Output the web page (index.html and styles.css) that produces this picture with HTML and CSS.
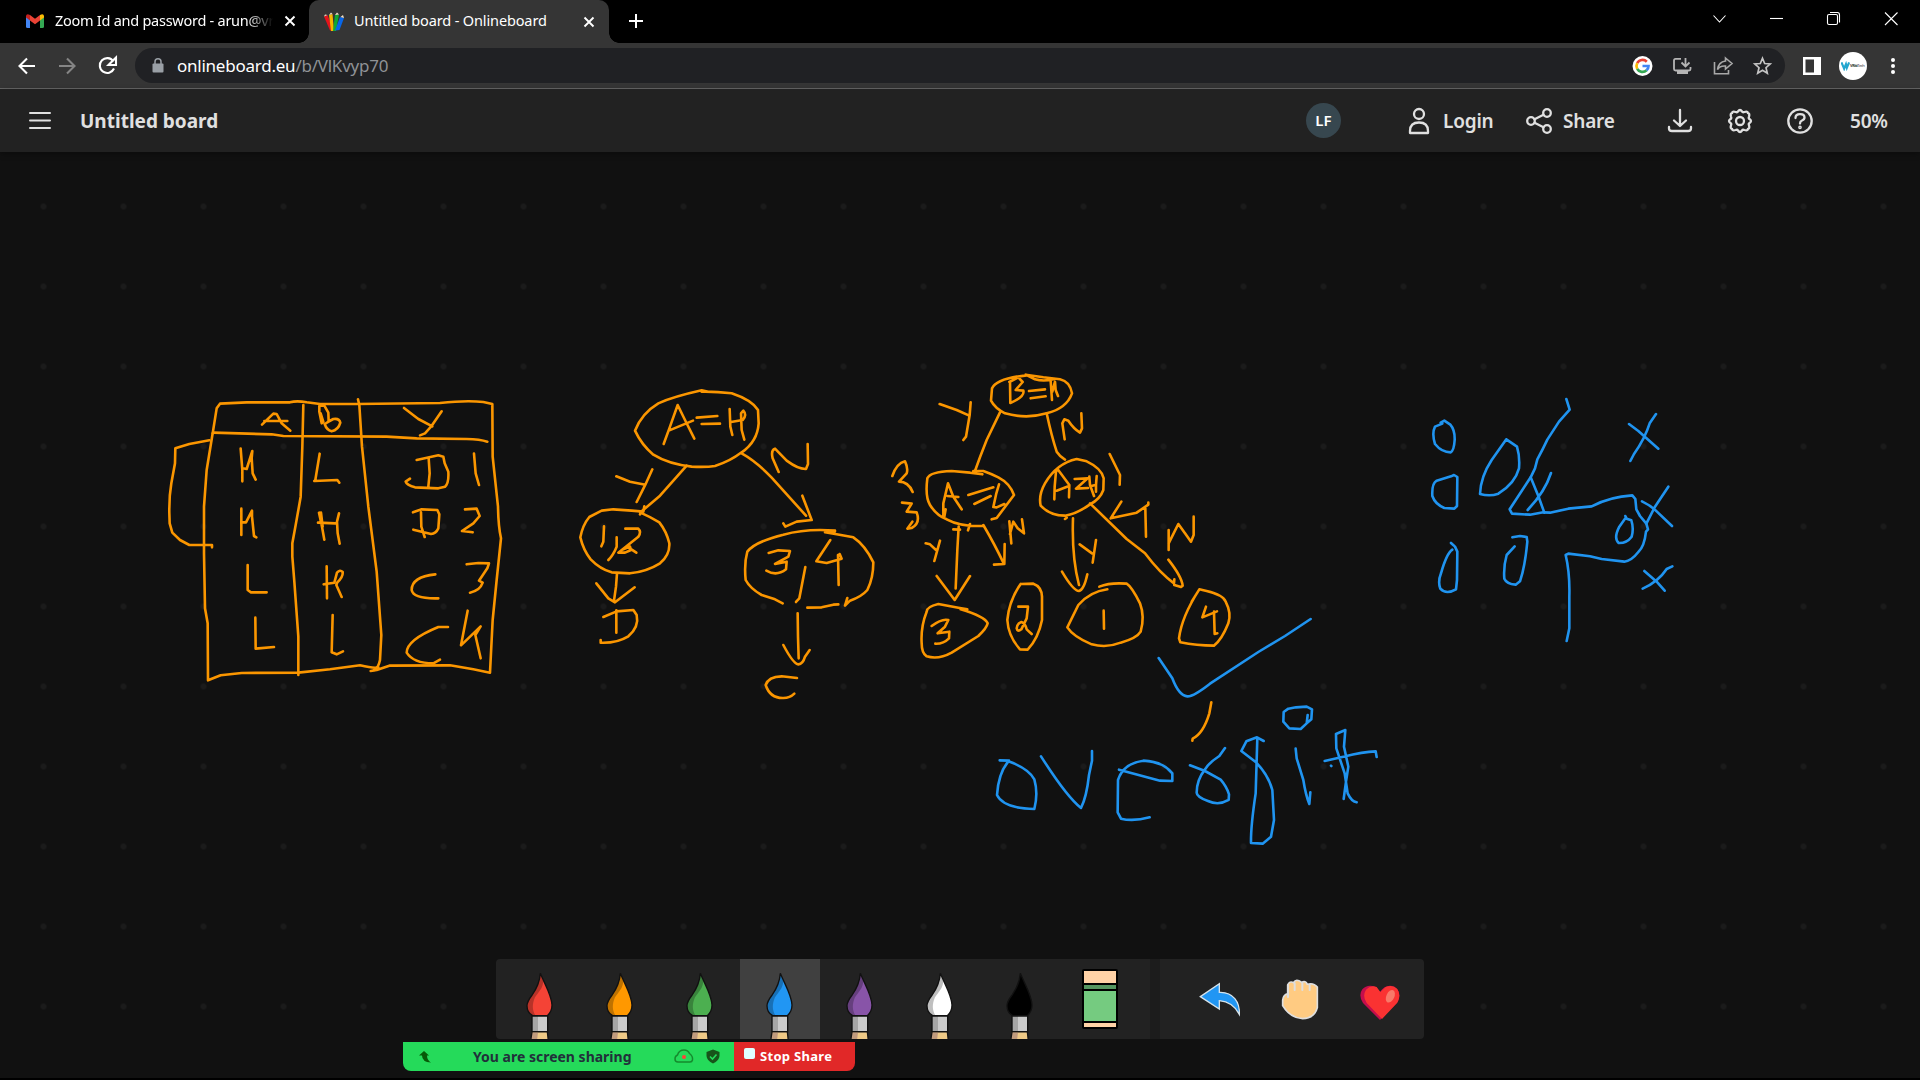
FILE: index.html
```html
<!DOCTYPE html>
<html lang="en">
<head>
<meta charset="utf-8">
<title>Untitled board - Onlineboard</title>
<link rel="stylesheet" href="styles.css">
</head>
<body>
<svg class="defs" width="0" height="0" aria-hidden="true">
  <defs>
    <symbol id="brush" viewBox="0 0 240 240">
      <path d="M95 220H143L145 246H92Z" fill="#efc986"/>
      <path d="M95 220H114L111 246H92Z" fill="#c09a7c"/>
      <path d="M96 218L92 246M142 218L145 246" stroke="#111" stroke-width="4" fill="none"/>
      <rect x="97" y="171" width="46" height="47" fill="#cbcbcb"/>
      <rect x="97" y="171" width="17" height="47" fill="#a6a6a6"/>
      <rect x="96" y="171" width="47" height="47" fill="none" stroke="#111" stroke-width="4"/>
      <path d="M121 43C119 68 113 84 97 107C88 119 81 128 81 140C81 153 87 164 98 170H142C152 161 156 151 156 138C155 108 135 78 121 43Z" fill="currentColor"/>
      <path d="M121 43C119 68 113 84 97 107C88 119 81 128 81 140C81 153 87 164 98 170H107C96 155 96 135 105 115C116 98 129 88 130 66Z" fill="#000" opacity=".25"/>
      <path d="M121 43C119 68 113 84 97 107C88 119 81 128 81 140C81 153 87 164 98 170H142C152 161 156 151 156 138C155 108 135 78 121 43Z" fill="none" stroke="#111" stroke-width="4"/>
    </symbol>
    <symbol id="cross" viewBox="0 0 12 12"><path d="M1.500 1.500L10.500 10.500M10.500 1.500L1.500 10.500" stroke="#fff" stroke-width="1.900"/></symbol>
  </defs>
</svg>

<div class="tabs">
  <div class="tab">
    <svg class="favicon" width="18" height="14" viewBox="0 0 18 14"><path d="M0 2V12.500Q0 14 1.500 14H4V5Z" fill="#4285f4"/><path d="M18 2V12.500Q18 14 16.500 14H14V5Z" fill="#34a853"/><path d="M14 1V6.500L18 3.500V2Q17.500-1 14 1Z" fill="#fbbc04"/><path d="M4 1V6.500L0 3.500V2Q.5-1 4 1Z" fill="#c5221f"/><path d="M4 1L9 4.800L14 1V6.500L9 10.300L4 6.500Z" fill="#ea4335"/></svg>
    <span class="tab-title mail">Zoom Id and password - arun@vr</span>
    <svg class="tab-close" width="12" height="12"><use href="#cross"/></svg>
  </div>
  <div class="tab active">
    <svg class="favicon" width="20" height="19" viewBox="0 0 20 19"><path d="M0 4.500L3.500 3L9.500 18.500H6Z" fill="#e3131b"/><path d="M5 3L8.500 2L10 19H7Z" fill="#f7b500"/><path d="M11 3L15 2.500L12 19H9Z" fill="#10a832"/><path d="M16 5L20 6L15.500 18L11 18.500Z" fill="#0866e8"/><path d="M0 4.500L1 2.500L3.500 3ZM5 3L7 .5L8.500 2ZM11 3L13 .5L15 2.500ZM16.500 5L19 3L20 6Z" fill="#f3e2cb"/></svg>
    <span class="tab-title">Untitled board - Onlineboard</span>
    <svg class="tab-close" width="12" height="12"><use href="#cross"/></svg>
  </div>
  <svg class="new-tab" width="16" height="16" viewBox="0 0 16 16"><path d="M8 1V15M1 8H15" stroke="#fff" stroke-width="2"/></svg>
  <div class="window-controls">
    <svg width="57" height="37" viewBox="0 0 57 37"><path d="M22.500 15.500L28.500 22L34.500 15.500"/></svg>
    <svg width="57" height="37" viewBox="0 0 57 37"><path d="M22 18.500H35"/></svg>
    <svg width="57" height="37" viewBox="0 0 57 37"><rect x="22.500" y="14.500" width="10" height="10" rx="1.500"/><path d="M25 12.500H32.500Q34.500 12.500 34.500 15V22.500"/></svg>
    <svg width="58" height="37" viewBox="0 0 58 37"><path d="M23 12.500L35.500 25M35.500 12.500L23 25"/></svg>
  </div>
</div>

<div class="toolbar">
  <svg class="nav" width="40" height="40" viewBox="0 0 40 40"><path d="M28 20H13M20 12.500L12.500 20L20 27.500"/></svg>
  <svg class="nav off" width="40" height="40" viewBox="0 0 40 40"><path d="M12 20H27M20 12.500L27.500 20L20 27.500"/></svg>
  <svg class="nav" width="40" height="40" viewBox="0 0 40 40"><path d="M26.300 15.300A7.400 7.400 0 1 0 27 22.500"/><path d="M29 11.500V19H21.500Z" fill="#fff" stroke="none"/></svg>
  <div class="address">
    <svg class="lock" width="12" height="15" viewBox="0 0 12 15"><rect x=".5" y="5.500" width="11" height="9" rx="1" fill="#9aa0a6"/><path d="M3 6V3.800A3 3 0 0 1 9 3.800V6" fill="none" stroke="#9aa0a6" stroke-width="1.500"/></svg>
    <span class="url">onlineboard.eu<span class="path">/b/VlKvyp70</span></span>
    <svg class="act" width="40" height="35" viewBox="0 0 40 35"><circle cx="20.500" cy="18" r="10" fill="#fff"/><g fill="none" stroke-width="2.700"><path d="M24.800 13.700A6 6 0 0 0 15.200 15.200" stroke="#ea4335"/><path d="M15.200 15.200A6 6 0 0 0 15.200 20.800" stroke="#fbbc05"/><path d="M15.200 20.800A6 6 0 0 0 24.600 22.300" stroke="#34a853"/><path d="M24.600 22.300A6 6 0 0 0 26.500 18H20.500" stroke="#4285f4"/></g></svg>
    <svg class="act" width="40" height="35" viewBox="0 0 40 35"><g fill="none" stroke="#b5b5b5" stroke-width="1.800"><path d="M19 10.800H13.500Q12 10.800 12 12.500V21Q12 22.500 13.500 22.500H27Q28.500 22.500 28.500 21V19"/><path d="M23.500 10V18M19.500 14.500L23.500 18.500L27.500 14.500"/></g><path d="M15 23H26V26H15Z" fill="#b5b5b5"/></svg>
    <svg class="act" width="40" height="35" viewBox="0 0 40 35"><g fill="none" stroke="#a8a8a8" stroke-width="1.600"><path d="M12.500 14V25.800H26.500V22"/><path d="M23.500 10L30 15.500L23.500 21V18Q18 17.500 15.500 21.500Q16.500 14 23.500 13Z"/></g></svg>
    <svg class="act" width="40" height="35" viewBox="0 0 40 35"><path d="M20.500 10.300L22.700 15.500L28.200 16L24 19.700L25.300 25.200L20.500 22.300L15.700 25.200L17 19.700L12.800 16L18.300 15.500Z" fill="none" stroke="#c4c4c4" stroke-width="1.700"/></svg>
  </div>
  <svg class="panel-icon" width="18" height="18" viewBox="0 0 18 18"><rect width="18" height="18" fill="#fff"/><rect x="2.500" y="2.500" width="8.500" height="13" fill="#353535"/></svg>
  <span class="avatar"><svg width="9" height="10" viewBox="0 0 10 10"><path d="M.5 1L3.500 8L5.500 3L6.500 7L9 1" fill="none" stroke="#23a6cf" stroke-width="2.400"/></svg><span><b>VRiti</b>Tech</span></span>
  <svg class="more" width="8" height="18" viewBox="0 0 8 18"><g fill="#fff"><circle cx="4" cy="3" r="2"/><circle cx="4" cy="9" r="2"/><circle cx="4" cy="15" r="2"/></g></svg>
</div>

<header class="board-bar">
  <svg class="burger" width="24" height="20" viewBox="0 0 24 20"><path d="M2 2H22M2 9.500H22M2 17H22" stroke="#e0e0e0" stroke-width="2" stroke-linecap="round"/></svg>
  <h1>Untitled board</h1>
  <span class="user">LF</span>
  <div class="action login"><svg width="28" height="28" viewBox="0 0 28 28"><circle cx="14" cy="7" r="5"/><path d="M5 26V24Q5 15.500 14 15.500Q23 15.500 23 24V26Z"/></svg><span>Login</span></div>
  <div class="action share"><svg width="28" height="28" viewBox="0 0 28 28"><circle cx="6" cy="14" r="3.800"/><circle cx="22" cy="6" r="3.800"/><circle cx="22" cy="22" r="3.800"/><path d="M9.500 12.200L18.500 7.800M9.500 15.800L18.500 20.200"/></svg><span>Share</span></div>
  <div class="tool"><svg width="28" height="28" viewBox="0 0 28 28"><path d="M14 3V19M8 13.500L14 19L20 13.500M3 20V21.500Q3 24 6 24H22Q25 24 25 21.500V20"/></svg></div>
  <div class="tool"><svg width="28" height="28" viewBox="0 0 28 28"><path d="M12 4.500Q14 1.500 16 4.500Q16.700 5.700 18.400 5Q21.800 4 21.900 6.100Q24 6.200 23 9.600Q22.300 11.300 23.500 12Q26.500 14 23.500 16Q22.300 16.700 23 18.400Q24 21.800 21.900 21.900Q21.800 24 18.400 23Q16.700 22.300 16 23.500Q14 26.500 12 23.500Q11.300 22.300 9.600 23Q6.200 24 6.100 21.900Q4 21.800 5 18.400Q5.700 16.700 4.500 16Q1.500 14 4.500 12Q5.700 11.300 5 9.600Q4 6.200 6.100 6.100Q6.200 4 9.600 5Q11.300 5.700 12 4.500Z"/><circle cx="14" cy="14" r="4"/></svg></div>
  <div class="tool"><svg width="28" height="28" viewBox="0 0 28 28"><circle cx="14" cy="14" r="11.700"/><path d="M9.500 11Q9.500 7.200 14 7.200Q18.500 7.200 18.500 10.500Q18.500 12.500 16 13.500Q14 14.300 14 16.500"/><circle cx="14" cy="20.300" r=".7"/></svg></div>
  <span class="zoom">50%</span>
</header>

<main class="board">
  <svg class="ink" width="1920" height="926" viewBox="0 152 1920 926">
    <!-- truth table -->
    <g class="orange" transform="translate(150 380) scale(.33333)">
      <path d="M188 160L200 85L210 71L290 67L420 67Q440 61 470 67L510 72L620 72L870 69Q950 60 1000 66L1027 72L1028 230L1044 380Q1045 440 1053 475L1040 600L1028 720L1020 878L970 868L900 856L718 857L680 870L662 873"/>
      <path d="M685 862Q672 866 630 856L540 868L445 878L275 879L212 886L174 901L173 730L165 685L162 520L162 380L170 270L188 160"/>
      <path d="M190 158L365 163L400 168L710 170L800 175L950 177Q990 178 1012 185"/>
      <path d="M460 75L457 200L452 350Q440 420 427 490L427 530L433 605L445 770L445 885"/>
      <path d="M624 58L628 75L636 200L655 380L680 575L694 765L690 840Q685 865 672 870"/>
      <path d="M178 181L118 192L76 205L75 250L64 310Q57 350 58 400L59 430L67 458L90 480L118 495L186 495L186 502"/>
      <path d="M336 134L370 101L380 102L395 130L421 152M343 123L412 123M508 78L508 95L515 130L520 126L512 100M513 77L523 77L535 98L536 125L524 132Q530 150 545 154Q565 150 571 128Q568 114 550 117L533 126"/>
      <path d="M762 84L805 117L847 139M875 94L843 140L825 160L810 166"/>
      <path d="M272 206L277 270L277 304M278 265L290 267L307 213L305 235L308 280L317 299M509 221L496 300L493 303L562 300L568 308M800 240L865 226L880 230L884 250L895 275Q897 310 885 320L865 325L795 322Q770 315 767 305L780 296M836 235L839 280L835 320M972 221L977 280L987 315"/>
      <path d="M274 386L274 465M276 427L288 427L306 392L306 410L312 468L319 472M507 398L516 440L523 479M513 398L518 440M504 428L556 430M567 400L561 425L563 460L569 491M789 397L815 388L862 390L868 403L865 445Q858 460 843 462L790 449M813 397L814 440L824 471M945 388L980 386L989 408L970 430L936 453L968 457"/>
      <path d="M293 555L293 630L303 637L350 637M530 559L531 655M521 613L553 608L561 578Q570 568 578 576Q580 590 562 607L559 615L575 651M856 583Q785 590 785 630Q790 657 865 655M950 553L985 549L1017 550L1012 565L987 602L998 608Q990 632 960 638"/>
      <path d="M316 713L317 806L372 801M548 705L545 817L560 823L579 814M894 741L865 741Q770 780 770 818Q790 850 850 850L870 839M953 692L933 796L992 739L976 765L992 835"/>
    </g>
    <!-- first tree -->
    <g class="orange" transform="translate(560 370) scale(.33333)">
      <path d="M445 65L425 61Q340 80 295 100Q245 130 225 182Q245 225 280 254Q325 282 395 290Q440 292 465 288Q510 274 545 247Q592 215 596 160L594 120Q575 90 515 70Q465 64 425 65"/>
      <path d="M311 222L330 170L353 105L375 150L403 206M328 181L399 152M410 143L472 138M425 162L480 161M509 117L511 170L517 195M513 156L548 150Q562 135 550 122L543 130L545 180L553 209"/>
      <path d="M380 287L300 377L245 424L240 433M169 319L210 335L256 344M277 298L256 344L230 396M545 250Q590 275 635 323L738 437M755 450L727 377M755 450L710 455L676 470L670 460M656 306L638 265Q632 240 645 236L680 272Q715 298 738 297L744 282L743 222"/>
      <path d="M253 409L250 425L215 422L160 418L125 422L88 441Q68 465 61 502Q70 540 92 568Q120 597 155 607L210 610Q260 605 300 580Q330 555 328 520Q320 485 298 457Q270 440 240 427"/>
      <path d="M132 469L130 515L124 529M170 502L170 530Q160 555 145 570M196 476L235 476Q245 485 235 500L175 548L195 548L213 540L210 530L190 538M205 532L229 548M171 610L168 650L162 692M109 640L145 685L165 697L224 652M169 721L169 788M130 741L170 724L220 720L230 735Q238 770 205 799Q170 820 122 818L122 810"/>
      <path d="M825 484L795 487L830 493L880 502Q915 525 940 577Q940 625 922 660Q905 680 870 692L855 707L862 684M835 703L820 704L785 712L742 713M668 700L645 688L605 675Q570 655 557 630Q552 580 562 545Q585 515 670 494Q740 475 825 482"/>
      <path d="M626 549L655 541L690 543L685 560L645 582L680 575L678 598Q650 620 619 602M736 591L718 685L708 696M811 510L769 574L800 579L845 566L839 552M834 555L836 645M713 730L714 800L716 865M670 825Q700 882 715 883Q729 882 735 860L749 840M711 924L665 919Q625 920 617 945Q630 985 670 984Q690 984 703 971"/>
    </g>
    <!-- second tree -->
    <g class="orange" transform="translate(880 360) scale(.33333)">
      <path d="M440 46Q350 55 336 85L333 122Q345 145 375 160Q440 178 500 160Q560 145 576 100Q570 65 540 58L490 52L437 44L465 58Q490 65 520 58M390 65L391 129M388 66L415 52L428 66L407 90L430 92Q435 110 391 129M447 93L495 88M452 115L497 109M512 63L516 120M517 95L525 65L527 90L534 108"/>
      <path d="M179 132L230 150L268 167M272 127L269 165L258 230L250 240M360 157L320 240Q300 290 285 333M554 238L547 190L553 178L565 182Q580 205 600 218L606 205L604 160M500 160Q515 230 530 275Q540 290 555 299"/>
      <path d="M307 343L270 338L215 333Q150 335 142 355Q135 410 150 435Q170 467 200 478Q240 500 310 498M220 508L240 509M264 511L270 492M335 478L350 474L402 405Q390 370 355 352Q330 340 310 333L280 333M190 465L190 430L204 370L220 410L245 448M202 408L235 411M265 405L340 382M283 432L332 408M197 448L193 470M357 373L349 400L340 441L350 442L373 432"/>
      <path d="M37 348Q50 310 75 304Q85 325 80 340L57 365Q85 365 98 396M66 428L95 431L80 455L110 457Q122 490 95 504L82 506L97 485M137 550L150 553L168 570M180 542L163 603M236 500L232 570L227 685M170 648L224 720L270 648M310 495Q345 555 370 608M374 552L373 612L342 614M388 484L394 550M390 522L400 485L413 505L432 520L426 478"/>
      <path d="M590 297L620 304Q665 325 671 355L670 390Q660 418 630 433Q590 462 555 467Q510 467 482 437Q475 405 495 370Q530 310 590 297M523 418L524 380L528 335L533 328L568 375L567 412M530 392L567 378M584 357L623 355L588 386L624 384M628 350L630 375L642 408M634 378L646 375M650 348L648 375L648 395M689 282L720 345L719 374M555 477L560 473"/>
      <path d="M579 475Q575 590 597 675M546 635Q580 693 597 693Q612 690 622 643M599 553L636 580M648 540L638 608M630 430L740 537L795 580Q840 640 882 670L883 658M865 599Q905 650 908 677L903 681L883 675M724 425L692 475L770 458L805 434L805 428M796 445L798 530M866 570L866 510M866 550L895 492L915 520L933 545L941 525L941 470"/>
      <path d="M262 748L235 743L175 732Q140 740 140 755Q122 800 125 850Q125 880 140 889Q175 900 215 878L295 828Q320 805 323 790Q315 770 242 748M155 798Q185 775 205 780L195 800L173 820L208 815L207 835Q190 852 166 851M422 672L460 671Q485 680 486 710L486 780Q475 835 443 869L420 868Q385 830 382 780Q388 720 422 672M415 740L444 740L440 775L424 808Q412 817 410 805Q412 790 424 786Q436 790 440 808L455 822"/>
      <path d="M682 688Q630 695 595 735L562 802Q580 830 635 853Q680 865 722 848Q770 835 782 815Q795 770 780 730Q755 680 740 671Q690 667 658 680M671 752L672 806"/>
    </g>
    <g class="orange" transform="translate(980 600) scale(.33333)">
      <path d="M635 5L658 -32L680 -27Q730 -15 737 5Q755 40 745 70Q725 120 702 137Q650 137 601 127L597 115Q605 50 658 -32M678 20L667 52L711 34M702 35L704 102L712 100M694 307L688 340Q670 400 638 416L637 422"/>
    </g>
    <!-- check mark and caption -->
    <g class="blue" transform="translate(980 600) scale(.33333)">
      <path d="M536 174L577 235Q597 288 622 289Q640 290 690 251L835 156L915 108L992 57"/>
      <path d="M59 481L87 482M85 484Q145 505 163 538Q175 580 163 627Q70 625 51 585Q55 520 85 484M183 469Q260 590 303 624Q320 590 327 525L336 482L336 453"/>
      <path d="M417 509L540 542L577 543L577 520Q550 485 490 482Q430 490 414 540L413 637L423 656Q460 665 509 652M630 496L675 513L722 539Q740 560 747 583L746 600Q715 618 684 603Q650 590 650 578Q650 540 675 508Q685 490 718 468L735 444"/>
      <path d="M851 423L831 412L799 424L784 453L828 487Q865 525 877 570L882 660L873 710L848 731L813 729Q812 680 827 580L832 415"/>
      <path d="M947 446L950 475L970 540Q977 585 988 612L991 577M948 322L980 320L996 328L994 358L980 370L962 387L928 385L910 365L911 336L925 326L948 322M983 345L980 370"/>
      <path d="M1034 483L1090 470Q1150 455 1187 454L1190 471M1068 402L1096 390L1092 440L1105 500L1098 545L1091 597M1068 402L1069 445L1094 520L1103 580Q1115 605 1130 607M1053 497L1054 498"/>
    </g>
    <!-- decision boundary sketch -->
    <g class="blue" transform="translate(1410 380) scale(.33333)">
      <path d="M92 128L103 122L121 134Q135 150 134 180Q132 212 122 217Q95 217 75 192Q65 160 75 140L97 131M123 289L132 285L142 291L141 378L133 386L103 384Q75 372 67 348Q65 310 80 302L123 289M123 489L135 500L142 515L141 600L138 628Q108 645 91 626Q83 605 93 580Q110 520 127 509"/>
      <path d="M289 178L321 200Q330 230 327 265Q315 310 265 341Q240 350 210 342Q212 290 245 240L289 178M307 472L330 468L350 471L352 485Q345 560 330 604L317 614Q290 612 283 596Q280 560 290 525L314 499M646 408L650 416L664 421Q672 445 665 470Q650 490 626 489Q610 475 628 440L646 415"/>
      <path d="M469 57L479 89L447 125L412 179Q400 205 382 238L375 265L362 292L299 388L306 401L360 404L400 397L420 398L475 386L545 379Q600 350 667 346L676 357L679 388L690 408L709 431L714 448L708 455Q703 500 685 516Q665 542 643 545L575 537L540 529L475 521L467 525Q480 580 478 650L478 745L470 783"/>
      <path d="M362 292L385 348L403 398M423 279Q405 335 353 390M657 132L685 153L745 206M738 102L719 130Q705 175 672 222L661 243M696 364Q720 375 740 394L786 438M775 320L735 380L709 431M703 573L740 605L764 632M787 559L770 567Q745 605 698 626"/>
    </g>
  </svg>

  <div class="dock">
    <div class="brushes">
      <div class="slot red"><svg width="80" height="80"><use href="#brush"/></svg></div>
      <div class="slot amber"><svg width="80" height="80"><use href="#brush"/></svg></div>
      <div class="slot green"><svg width="80" height="80"><use href="#brush"/></svg></div>
      <div class="slot azure selected"><svg width="80" height="80"><use href="#brush"/></svg></div>
      <div class="slot violet"><svg width="80" height="80"><use href="#brush"/></svg></div>
      <div class="slot white"><svg width="80" height="80"><use href="#brush"/></svg></div>
      <div class="slot black"><svg width="80" height="80"><use href="#brush"/></svg></div>
      <div class="slot"><svg width="80" height="80" viewBox="0 0 240 240"><rect x="66" y="30" width="108" height="180" rx="6" fill="#000"/><path d="M72 36H168V72H72ZM72 192H168V204H72Z" fill="#ffd2a6"/><path d="M72 78H168V90H72Z" fill="#559660"/><path d="M72 96H168V186H72Z" fill="#75cb80"/></svg></div>
    </div>
    <div class="divider"></div>
    <div class="extras">
      <div class="slot"><svg width="80" height="80" viewBox="0 0 240 240"><path d="M61 113L118 74V100C160 98 180 130 178 166C165 141 145 127 118 125V150Z" fill="#2196f3" stroke="#d5e2ea" stroke-width="4"/></svg></div>
      <div class="slot"><svg width="80" height="80" viewBox="0 0 240 240"><path d="M83 95V78Q88 65 101 71Q108 57 125 70Q137 64 142 76Q160 70 172 84V146Q164 178 128 179Q90 177 68 140V123Q70 108 83 104Z" fill="#ffcb82" stroke="#dedede" stroke-width="5"/><path d="M84 78V114M104 73V93M127 72V93M149 77V93" stroke="#dedede" stroke-width="6" fill="none" stroke-linecap="round"/></svg></div>
      <div class="slot"><svg width="80" height="80" viewBox="0 0 240 240"><path d="M120 183L69 132Q54 109 67 91Q82 74 105 83L120 99Q137 74 163 83Q186 99 174 127Z" fill="#c50d4c"/><path d="M126 180L80 132Q66 112 78 92Q93 77 110 84L121 99L137 84Q158 75 172 90Q184 110 172 131Z" fill="#fa3232"/><ellipse cx="151" cy="112" rx="12" ry="20" transform="rotate(25 151 112)" fill="#f87969"/></svg></div>
    </div>
  </div>

  <div class="sharing">
    <div class="status">
      <svg width="12" height="12" viewBox="0 0 12 12"><path d="M5 0L0 4.500H3Q3 11 12 11.500Q8 9 8 4.500H10Z" fill="#075907"/></svg>
      <span>You are screen sharing</span>
      <svg class="cloud" width="20" height="15" viewBox="0 0 20 15"><path d="M4 13Q1 13 1 10Q1 7 3.500 6Q5 1 10 1Q14 1 15.500 4.500Q19 7 18.500 11Q18 13 16 13Z" fill="none" stroke="#158a2d" stroke-width="1.500"/><circle cx="10" cy="8" r="2" fill="#ff4338"/></svg>
      <svg class="shield" width="14" height="15" viewBox="0 0 14 15"><path d="M7 .5L13.500 3V7Q13 12 7 14.500Q1 12 .5 7V3Z" fill="#17541a"/><path d="M4 7.500L6.500 10L10.500 5.500" fill="none" stroke="#25da5a" stroke-width="1.600"/></svg>
    </div>
    <div class="stop"><i></i><span>Stop Share</span></div>
  </div>
</main>
</body>
</html>
```
FILE: styles.css
```css
* { box-sizing: border-box; }
body {
  margin: 0;
  width: 1920px;
  height: 1080px;
  overflow: hidden;
  display: flex;
  flex-direction: column;
  background: #000;
  color: #fff;
  font-family: "Noto Sans", "Open Sans", sans-serif;
}
svg { display: block; flex: none; }
.defs { position: absolute; }

/* browser tabs */
.tabs { height: 43px; display: flex; align-items: flex-start; }
.tab { display: flex; align-items: center; width: 309px; height: 43px; padding: 0 13px 2px 26px; }
.tab-title { flex: 1; margin-left: 11px; padding-bottom: 2px; overflow: hidden; white-space: nowrap; font-size: 14.5px; letter-spacing: -0.2px; }
.tab-title.mail { flex: none; width: 218px; letter-spacing: -0.26px; -webkit-mask-image: linear-gradient(90deg, #000 88%, transparent 100%); mask-image: linear-gradient(90deg, #000 88%, transparent 100%); }
.tab-close { margin-left: auto; }
.tab.active { position: relative; width: 300px; padding: 0 14px 0 15px; background: #353535; border-radius: 10px 10px 0 0; }
.tab.active .tab-title { margin-left: 10px; padding-bottom: 3px; letter-spacing: -0.13px; }
.tab.active::before, .tab.active::after { content: ""; position: absolute; bottom: 0; width: 10px; height: 10px; }
.tab.active::before { left: -10px; background: radial-gradient(circle at 0 0, #000 9.5px, #353535 10px); }
.tab.active::after { right: -10px; background: radial-gradient(circle at 100% 0, #000 9.5px, #353535 10px); }
.new-tab { margin: 13px 0 0 19px; }
.window-controls { display: flex; margin-left: auto; }
.window-controls path, .window-controls rect { fill: none; stroke: #fff; stroke-width: 1.1; }

/* address bar */
.toolbar { height: 46px; display: flex; align-items: center; padding: 0 23px 0 7px; background: #353535; border-bottom: 1px solid #666; }
.nav path { fill: none; stroke: #fff; stroke-width: 2.1; }
.nav.off path { stroke: #858585; }
.address { display: flex; align-items: center; width: 1650px; height: 35px; margin-left: 8px; padding: 0 3px 0 17px; border-radius: 18px; background: #202124; }
.url { flex: 1; margin-left: 13px; font-size: 17px; letter-spacing: -0.24px; line-height: 35px; }
.path { color: #8f9296; }
.panel-icon { margin-left: 18px; }
.avatar { display: flex; align-items: center; width: 28px; height: 28px; margin-left: 18px; padding-left: 2px; border-radius: 50%; background: #fff; color: #333; font-size: 4px; white-space: nowrap; }
.avatar span { letter-spacing: -0.4px; }
.more { margin-left: auto; }

/* board header */
.board-bar { position: relative; z-index: 1; height: 63px; display: flex; align-items: center; padding: 0 30px 0 28px; background: #222; color: #e0e0e0; box-shadow: 0 2px 6px #0005; }
.board-bar h1 { margin: 0 0 0 28px; font-size: 19px; font-weight: 700; line-height: 28px; letter-spacing: 0; }
.user { width: 35px; height: 35px; margin-left: auto; border-radius: 50%; background: #37474f; color: #fff; font-size: 15px; font-weight: 600; line-height: 35px; text-align: center; }
.board-bar svg:not(.burger) { fill: none; stroke: #e0e0e0; stroke-width: 2.3; stroke-linecap: round; stroke-linejoin: round; }
.action { display: flex; align-items: center; font-size: 19px; font-weight: 600; }
.action span { margin-left: 10px; letter-spacing: -0.2px; }
.login { width: 120px; margin-left: 64px; }
.share { width: 125px; }
.tool { width: 60px; display: flex; justify-content: center; }
.zoom { width: 40px; margin-left: 20px; font-size: 19px; font-weight: 600; letter-spacing: -0.2px; }

/* canvas */
.board {
  position: relative;
  height: 926px;
  background: #111 radial-gradient(circle, #1b1b1b 2.6px, transparent 3.4px) 3.5px 14.5px / 80px 80px;
}
.ink { position: absolute; inset: 0; }
.ink path { fill: none; stroke-width: 7.8; stroke-linecap: round; stroke-linejoin: round; }
.orange { stroke: #fb9600; }
.blue { stroke: #2094f0; }

.dock { position: absolute; left: 496px; bottom: 39px; display: flex; width: 928px; height: 80px; border-radius: 4px; background: #222; overflow: hidden; }
.brushes { display: flex; padding: 0 10px 0 4px; }
.divider { width: 10px; background: #1c1c1c; }
.extras { display: flex; padding-left: 20px; }
.slot { width: 80px; height: 80px; }
.selected { background: #404040; }
.red { color: #f44336; }
.amber { color: #ff9800; }
.green { color: #4caf50; }
.azure { color: #2196f3; }
.violet { color: #8854a8; }
.white { color: #fff; }
.black { color: #000; }

.sharing { position: absolute; left: 403px; bottom: 7px; display: flex; height: 29px; border-radius: 0 0 8px 8px; overflow: hidden; font-weight: 700; font-size: 14px; }
.status { display: flex; align-items: center; width: 331px; padding-left: 16px; background: #25da5a; color: #21303a; }
.status span { width: 160px; margin-left: 42px; white-space: nowrap; letter-spacing: 0; }
.cloud { margin-left: 41px; }
.shield { margin-left: 12px; }
.stop { display: flex; width: 121px; padding-left: 10px; background: #e12828; line-height: 28px; font-size: 13px; }
.stop i { width: 11px; height: 11px; margin: 6px 5px 0 0; border-radius: 2px; background: #e0ffff; }
.stop span { white-space: nowrap; letter-spacing: 0.3px; }
```
